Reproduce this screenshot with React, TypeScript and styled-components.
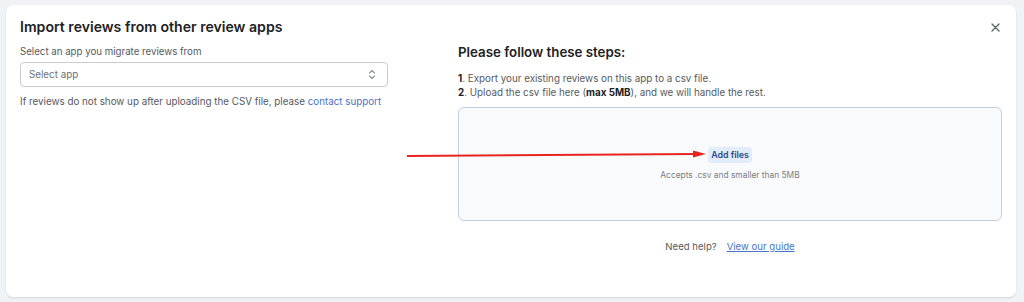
import { createGlobalStyle } from "styled-components";
import styled from "styled-components";

const GlobalStyle = createGlobalStyle`
  html, body {
    margin: 0;
    padding: 0;
    background: #f1f2f4;
  }
  body {
    font-family: Inter, "Noto Sans", sans-serif;
    -webkit-font-smoothing: antialiased;
  }
`;

const Page = styled.div`
  width: 1024px;
  height: 302px;
  padding: 5px 8px 5px 6px;
  box-sizing: border-box;
`;

const Card = styled.div`
  position: relative;
  height: 292px;
  box-sizing: border-box;
  background: #ffffff;
  border-radius: 7px;
  box-shadow: 0 1px 2px rgba(0, 0, 0, 0.12);
  padding: 12px 14px 0 14px;
`;

const Header = styled.div`
  display: flex;
  align-items: center;
  justify-content: space-between;
  height: 20px;
`;

const Title = styled.h2`
  margin: 0;
  font-size: 14.1px;
  line-height: 20px;
  font-weight: 600;
  color: #202223;
`;

const CloseButton = styled.button`
  display: flex;
  align-items: center;
  justify-content: center;
  width: 14px;
  height: 14px;
  padding: 0;
  border: none;
  background: none;
  color: #5c5f62;
`;

const Columns = styled.div`
  display: grid;
  grid-template-columns: 368px 544px;
  column-gap: 70px;
  margin-top: 7px;
`;

const Column = styled.div`
  display: flex;
  flex-direction: column;
`;

const Label = styled.div`
  font-size: 9.7px;
  line-height: 14px;
  margin-top: 1px;
  color: #55595e;
`;

const Select = styled.div`
  margin-top: 3px;
  height: 25px;
  box-sizing: border-box;
  border: 1px solid #c9cccf;
  border-radius: 4px;
  display: flex;
  align-items: center;
  justify-content: space-between;
  padding: 0 11px 0 8px;
  font-size: 9.8px;
  color: #6d7175;
`;

const Helper = styled.p`
  margin: 8px 0 0;
  font-size: 9.8px;
  line-height: 14px;
  color: #55595e;
  white-space: nowrap;
`;

const Link = styled.a`
  color: #4a72c9;
  text-decoration: none;
`;

const StepsTitle = styled.h3`
  margin: 0;
  font-size: 13.3px;
  line-height: 16px;
  font-weight: 600;
  color: #202223;
`;

const Steps = styled.ol`
  list-style: none;
  margin: 12px 0 0;
  padding: 0;
`;

const Step = styled.li`
  font-size: 9.8px;
  line-height: 14px;
  color: #55595e;

  b {
    color: #202223;
    font-weight: 700;
  }
`;

const DropZone = styled.div`
  margin-top: 7px;
  height: 114px;
  box-sizing: border-box;
  border: 1px solid #c4cfdf;
  border-radius: 6px;
  background: #f9fafb;
  display: flex;
  flex-direction: column;
  align-items: center;
  justify-content: center;
  gap: 5px;
`;

const AddButton = styled.span`
  height: 16px;
  padding: 0 3px;
  display: flex;
  align-items: center;
  border-radius: 3px;
  background: #e3ecfb;
  color: #2c4a87;
  font-size: 8.8px;
  font-weight: 600;
`;

const Hint = styled.div`
  font-size: 8.4px;
  line-height: 14px;
  color: #7a7e83;
`;

const HelpRow = styled.div`
  margin-top: 18px;
  display: flex;
  justify-content: center;
  gap: 10px;
  font-size: 9.6px;
  line-height: 16px;
  color: #55595e;
`;

const GuideLink = styled.a`
  color: #4a72c9;
  text-decoration: underline;
`;

const Arrow = styled.svg`
  position: absolute;
  left: 400px;
  top: 144px;
  pointer-events: none;
`;

const ChevronIcon = () => (
  <svg width="8" height="11" viewBox="0 0 8 11" fill="none" stroke="#8c9196" strokeWidth="1.1" strokeLinecap="round" strokeLinejoin="round">
    <path d="M1.5 4 L4 1.5 L6.5 4" />
    <path d="M1.5 7 L4 9.5 L6.5 7" />
  </svg>
);

const CloseIcon = () => (
  <svg width="9" height="9" viewBox="0 0 9 9" stroke="currentColor" strokeWidth="1.3" strokeLinecap="round">
    <path d="M1 1 L8 8 M8 1 L1 8" />
  </svg>
);

export default function App() {
  return (
    <>
      <GlobalStyle />
      <Page>
        <Card>
          <Header>
            <Title>Import reviews from other review apps</Title>
            <CloseButton aria-label="Close">
              <CloseIcon />
            </CloseButton>
          </Header>
          <Columns>
            <Column>
              <Label>Select an app you migrate reviews from</Label>
              <Select>
                <span>Select app</span>
                <ChevronIcon />
              </Select>
              <Helper>
                If reviews do not show up after uploading the CSV file, please <Link href="#">contact support</Link>
              </Helper>
            </Column>
            <Column>
              <StepsTitle>Please follow these steps:</StepsTitle>
              <Steps>
                <Step>
                  <b>1</b>. Export your existing reviews on this app to a csv file.
                </Step>
                <Step>
                  <b>2</b>. Upload the csv file here (<b>max 5MB</b>), and we will handle the rest.
                </Step>
              </Steps>
              <DropZone>
                <AddButton>Add files</AddButton>
                <Hint>Accepts .csv and smaller than 5MB</Hint>
              </DropZone>
              <HelpRow>
                <span>Need help?</span>
                <GuideLink href="#">View our guide</GuideLink>
              </HelpRow>
            </Column>
          </Columns>
          <Arrow width="310" height="20" viewBox="0 0 310 20">
            <line x1="1" y1="7" x2="290" y2="5" stroke="#e8241f" strokeWidth="2" />
            <path d="M287 1.5 L300 5 L287 8.5 Z" fill="#e8241f" />
          </Arrow>
        </Card>
      </Page>
    </>
  );
}
